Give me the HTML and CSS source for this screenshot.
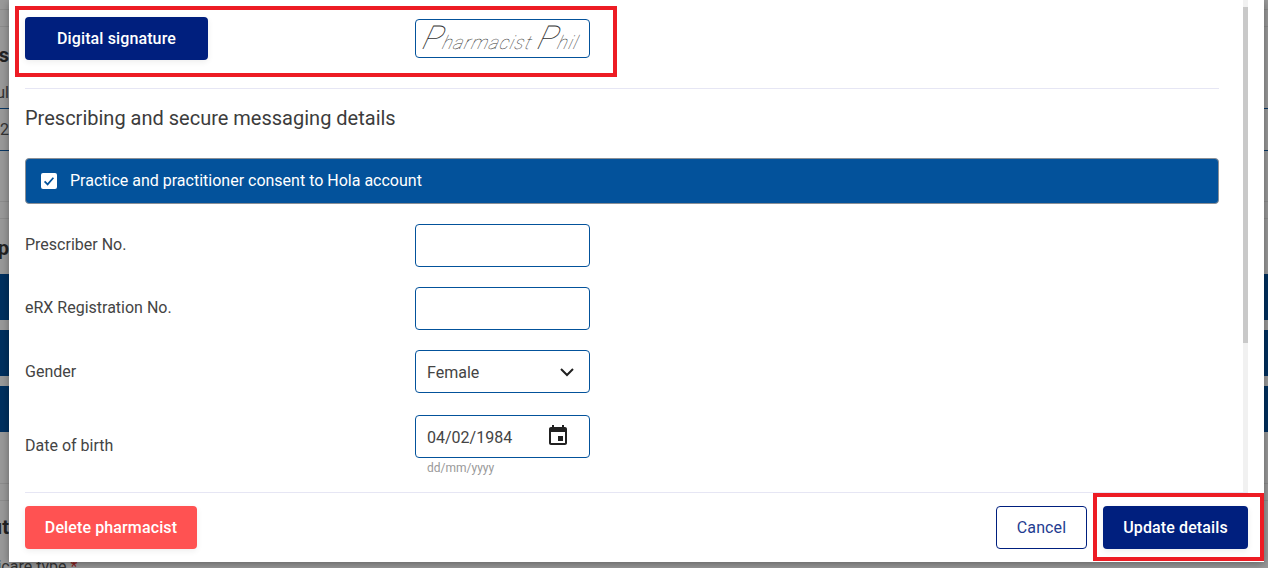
FILE: index.html
```html
<!DOCTYPE html>
<html lang="en">
<head>
<meta charset="utf-8">
<title>Edit pharmacist</title>
<link rel="stylesheet" href="styles.css">
</head>
<body>
<div class="page">
  <div class="backdrop">
    <div class="bg-row h10 ruled"></div>
    <div class="bg-row h17 ruled"></div>
    <div class="bg-row h56"><span class="clip strong">Details</span></div>
    <div class="bg-row h26 blue-ruled pb6"><span class="clip">Consul</span></div>
    <div class="bg-row h42 blue-ruled"><span class="clip">2024 02</span></div>
    <div class="bg-row h51 ruled"></div>
    <div class="bg-row h17 ruled"></div>
    <div class="bg-row h55 pt3"><span class="clip strong">Setup</span></div>
    <div class="bg-bar"></div>
    <div class="bg-bar bar-gap"></div>
    <div class="bg-bar bar-gap"></div>
    <div class="bg-row h52 ruled"></div>
    <div class="bg-row h17 ruled"></div>
    <div class="bg-row h52"><span class="clip strong">Profit</span></div>
    <div class="bg-row h26"><span class="medicare">Medicare type <em>*</em></span></div>
  </div>

  <section class="modal">
    <div class="modal-main">
      <div class="modal-body">
        <div class="sig-row">
          <button class="btn btn-navy btn-sig" type="button">Digital signature</button>
          <div class="sig-box"><span class="sig-text"><span class="sig-cap">P</span>harmacist <span class="sig-cap">P</span>hil</span></div>
        </div>
        <hr class="rule">
        <h2 class="section-title">Prescribing and secure messaging details</h2>
        <div class="consent">
          <span class="check">
            <svg viewBox="0 0 16 16" width="16" height="16"><path d="M3.6 8.4l3 3 5.8-6.6" fill="none" stroke="#03529b" stroke-width="1.7"/></svg>
          </span>
          <span>Practice and practitioner consent to Hola account</span>
        </div>
        <div class="form-row">
          <label class="form-label label-up" for="prescriber">Prescriber No.</label>
          <input class="field" id="prescriber" type="text">
        </div>
        <div class="form-row">
          <label class="form-label label-up" for="erx">eRX Registration No.</label>
          <input class="field" id="erx" type="text">
        </div>
        <div class="form-row">
          <label class="form-label" for="gender">Gender</label>
          <div class="field-wrap">
            <select class="field select" id="gender"><option>Female</option></select>
            <svg class="chevron" viewBox="0 0 14 9" width="14" height="9"><path d="M1 1l6 6 6-6" fill="none" stroke="#212121" stroke-width="2"/></svg>
          </div>
        </div>
        <div class="form-row date-row">
          <label class="form-label" for="dob">Date of birth</label>
          <div class="date-col">
            <div class="field-wrap">
              <input class="field" id="dob" type="text" value="04/02/1984">
              <svg class="calendar" viewBox="0 0 24 24" width="24" height="24"><path fill="#212121" d="M17 12h-5v5h5v-5zM16 1v2H8V1H6v2H5c-1.11 0-1.99.9-1.99 2L3 19c0 1.1.89 2 2 2h14c1.1 0 2-.9 2-2V5c0-1.1-.9-2-2-2h-1V1h-2zm3 18H5V8h14v11z"/></svg>
            </div>
            <div class="hint">dd/mm/yyyy</div>
          </div>
        </div>
      </div>
      <div class="scroll-track"><div class="scroll-thumb"></div></div>
    </div>
    <footer class="modal-footer">
      <button class="btn btn-danger" type="button">Delete pharmacist</button>
      <div class="footer-actions">
        <button class="btn btn-outline" type="button">Cancel</button>
        <button class="btn btn-navy btn-update" type="button">Update details</button>
      </div>
    </footer>
  </section>

  <div class="callout callout-sig"></div>
  <div class="callout callout-update"></div>
</div>
</body>
</html>
```

FILE: styles.css
```css
* { box-sizing: border-box; }
html, body { margin: 0; height: 100%; }
body { font-family: Roboto, "Liberation Sans", sans-serif; color: #3c3c3c; overflow: hidden; }

.page { position: relative; width: 1268px; height: 568px; overflow: hidden; background: #999; }

/* dimmed page behind the dialog */
.backdrop { display: flex; flex-direction: column; height: 568px; color: #333; font-size: 16px; }
.bg-row { display: flex; align-items: center; flex: none; }
.ruled { border-bottom: 1px solid #8c8c8c; }
.blue-ruled { border-bottom: 1px solid #0a3763; }
.h10 { height: 10px; }
.h17 { height: 17px; }
.h26 { height: 26px; }
.h42 { height: 42px; }
.h51 { height: 51px; }
.h52 { height: 52px; }
.h55 { height: 55px; }
.h56 { height: 56px; }
.pb6 { padding-bottom: 6px; }
.pt3 { padding-top: 3px; }
.clip { display: flex; justify-content: flex-end; width: 9px; overflow: hidden; white-space: nowrap; }
.strong { font-size: 20px; font-weight: 700; color: #222; }
.bg-bar { flex: none; height: 46px; background: #00305f; }
.bar-gap { margin-top: 10px; }
.medicare { margin-left: -34px; white-space: nowrap; color: #333; }
.medicare em { color: #8c1c1c; font-style: normal; }

/* dialog */
.modal {
  position: absolute; left: 9px; top: 0; width: 1255px; height: 562px;
  display: flex; flex-direction: column; background: #fff;
  box-shadow: 0 2px 8px rgba(0,0,0,.35);
}
.modal-main { display: flex; height: 492px; flex: none; }
.modal-body { width: 1234px; height: 492px; overflow: hidden; padding: 17px 24px 0 16px; }
.scroll-track { width: 5px; height: 492px; background: #f1f1f1; padding-top: 7px; }
.scroll-thumb { height: 336px; background: #c9c9c9; }

.sig-row { display: flex; align-items: center; }
.sig-box {
  width: 175px; height: 39px; margin-left: 207px; border: 1px solid #03529b; border-radius: 4px;
  display: flex; align-items: center; justify-content: center; overflow: hidden;
}
.sig-text {
  font-family: Roboto, sans-serif; font-style: italic; font-weight: 100; font-size: 19px; color: #333;
  letter-spacing: 1px; white-space: nowrap; transform: skewX(-16deg);
}
.sig-cap { font-size: 33px; line-height: 30px; }
.rule { height: 1px; margin: 28px 0 0; border: 0; background: #e6e6f4; }
.section-title { margin: 18px 0 0; font-size: 20px; line-height: 23px; font-weight: 400; color: #3c3c3c; }

.consent {
  display: flex; align-items: center; gap: 13px; height: 46px; margin-top: 28px; padding: 0 0 1px 15px;
  background: #03529b; border: 1px solid #8a8f96; border-radius: 4px;
  color: #fff; font-size: 16px; font-weight: 400;
}
.check { display: flex; width: 16px; height: 16px; background: #fff; border-radius: 2px; }

.form-row { display: flex; align-items: center; margin-top: 20px; }
.form-label { width: 390px; flex: none; font-size: 16px; line-height: 18px; color: #444; }
.label-up { padding-bottom: 2px; }
.date-row { margin-top: 22px; }
.date-col { display: flex; flex-direction: column; }
.field-wrap { position: relative; width: 175px; }
.field {
  display: block; width: 175px; height: 43px; padding: 1px 11px 0; background: #fff;
  border: 1px solid #03529b; border-radius: 4px; outline: 0;
  font: 400 16px Roboto, sans-serif; color: #444;
}
.select { appearance: none; }
.chevron { position: absolute; left: 145px; top: 18px; }
.calendar { position: absolute; left: 131px; top: 9px; }
.hint { height: 18px; padding: 3px 0 0 12px; font-size: 12px; line-height: 14px; color: #999; }

/* footer */
.modal-footer {
  display: flex; justify-content: space-between; height: 70px; margin-left: 16px; margin-right: 16px;
  padding-top: 13px; border-top: 1px solid #e6e6f4;
}
.footer-actions { display: flex; gap: 16px; }

.btn {
  height: 43px; padding: 0; border: 0; border-radius: 4px; cursor: pointer;
  font: 500 16px Roboto, sans-serif; letter-spacing: .12px; color: #fff;
  box-shadow: 0 2px 6px rgba(0,0,0,.07);
}
.btn-navy { background: #001f7e; }
.btn-sig { width: 183px; flex: none; }
.btn-update { width: 145px; }
.btn-danger { width: 172px; background: #ff5252; }
.btn-outline { width: 91px; background: #fff; border: 1px solid #001f7e; color: #1f3d91; font-weight: 400; box-shadow: none; }

/* annotation rectangles over the screenshot */
.callout { position: absolute; border: 4px solid #ed1c24; pointer-events: none; }
.callout-sig { left: 15px; top: 6px; width: 602px; height: 71px; }
.callout-update { left: 1093px; top: 493px; width: 171px; height: 68px; }
```
